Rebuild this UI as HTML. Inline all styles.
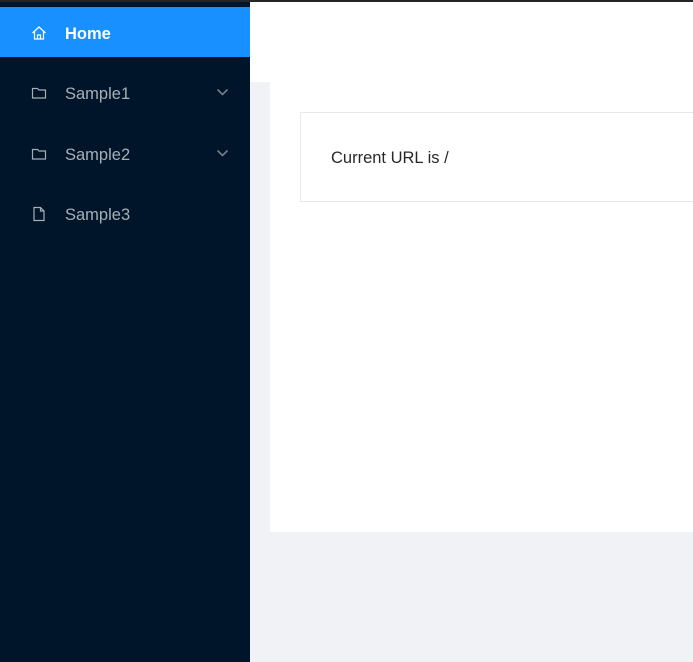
<!DOCTYPE html>
<html><head><style>
*{margin:0;padding:0;box-sizing:border-box}
body{width:693px;height:662px;overflow:hidden;background:#f0f2f5;font-family:"Liberation Sans",sans-serif;position:relative}
.top{position:absolute;left:0;top:0;width:693px;height:2px;background:#262626}
.side{position:absolute;left:0;top:2px;width:250px;height:660px;background:#001529}
.item{position:absolute;left:0;width:250px;height:50px;color:rgba(255,255,255,.65);font-size:16.5px;line-height:54px}
.item span{position:absolute;left:65px}
.item svg{position:absolute;left:31px;top:18px}
.chev{left:216px!important;top:21px!important}
.home{background:#1890ff;color:#fff;font-weight:bold}
.header{position:absolute;left:250px;top:2px;width:443px;height:80px;background:#fff}
.panel{position:absolute;left:270px;top:82px;width:423px;height:450px;background:#fff}
.card{position:absolute;left:300px;top:112px;width:400px;height:90px;border:1px solid #e8e8e8;background:#fff}
.card span{position:absolute;left:30px;top:36px;font-size:16.5px;color:rgba(0,0,0,.85)}
</style></head><body>
<div class="top"></div>
<div class="side">
<div class="item home" style="top:5px"><svg width="16" height="16" viewBox="0 0 16 16" fill="none" stroke="#fff" stroke-width="1.2"><path d="M1.5 8L8 2l6.5 6M3.5 6.5V14h9V6.5M6.5 14v-4h3v4"/></svg><span>Home</span></div>
<div class="item" style="top:65px"><svg width="16" height="16" viewBox="0 0 16 16" fill="none" stroke="rgba(255,255,255,.65)" stroke-width="1.2"><path d="M1.5 3.5h5l1.5 1.5h6.5v8h-13z"/></svg><span>Sample1</span><svg class="chev" width="13" height="8" viewBox="0 0 13 8" fill="none" stroke="rgba(255,255,255,.45)" stroke-width="1.6"><path d="M1.5 1.5l5 5 5-5"/></svg></div>
<div class="item" style="top:126px"><svg width="16" height="16" viewBox="0 0 16 16" fill="none" stroke="rgba(255,255,255,.65)" stroke-width="1.2"><path d="M1.5 3.5h5l1.5 1.5h6.5v8h-13z"/></svg><span>Sample2</span><svg class="chev" width="13" height="8" viewBox="0 0 13 8" fill="none" stroke="rgba(255,255,255,.45)" stroke-width="1.6"><path d="M1.5 1.5l5 5 5-5"/></svg></div>
<div class="item" style="top:186px"><svg width="16" height="16" viewBox="0 0 16 16" fill="none" stroke="rgba(255,255,255,.65)" stroke-width="1.2"><path d="M3 1.5h6.5l3.5 3.5v9.5H3z M9.5 1.5V5H13"/></svg><span>Sample3</span></div>
</div>
<div class="header"></div>
<div class="panel"></div>
<div class="card"><span>Current URL is /</span></div>
</body></html>
